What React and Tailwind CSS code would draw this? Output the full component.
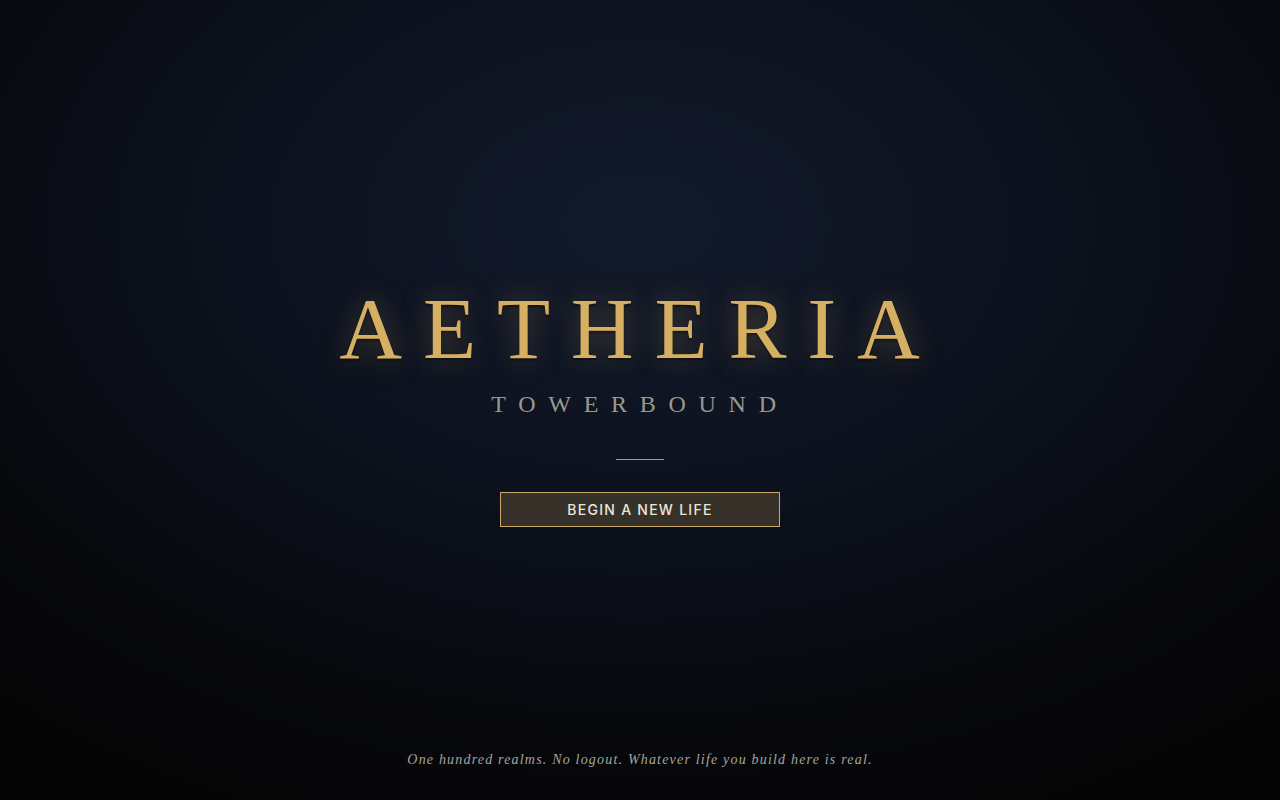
import React from 'react';

export default function App() {
    return (
        <div
            className="
                min-h-screen w-full
                flex flex-col items-center
                pt-[285px]
                bg-[radial-gradient(ellipse_75%_80%_at_50%_28%,#121a2b_0%,#0c111d_45%,#07080c_80%,#050506_100%)]
            "
        >
            <h1
                className="
                    text-[87px] leading-none
                    tracking-[20.8px]
                    text-[#d6b062]
                    [font-family:'Liberation_Serif',serif]
                    [text-shadow:0_0_28px_rgba(214,170,90,0.35),0_2px_2px_rgba(0,0,0,0.6)]
                "
            >
                AETHERIA
            </h1>

            <p
                className="
                    mt-5
                    text-[24px] leading-none
                    tracking-[0.53em]
                    text-[#9a998f]
                    [font-family:'Liberation_Serif',serif]
                "
            >
                TOWERBOUND
            </p>

            <div className="mt-[43px] w-12 h-px bg-[#b8975c]" />

            <button
                className="
                    mt-8
                    w-[280px] h-[35px]
                    flex items-center justify-center
                    border border-[#c9a86c]
                    bg-[#3b352b]/90
                    text-[14px] font-medium
                    tracking-[0.09em]
                    text-[#ece6da]
                    [font-family:Inter,sans-serif]
                "
            >
                BEGIN A NEW LIFE
            </button>

            <footer className="mt-auto pb-[30px]">
                <p
                    className="
                        text-[14px] leading-5 italic
                        tracking-[0.085em]
                        text-[#a6a49c]
                        [font-family:'Liberation_Serif',serif]
                    "
                >
                    One hundred realms. No logout. Whatever life you build here is real.
                </p>
            </footer>
        </div>
    );
}
